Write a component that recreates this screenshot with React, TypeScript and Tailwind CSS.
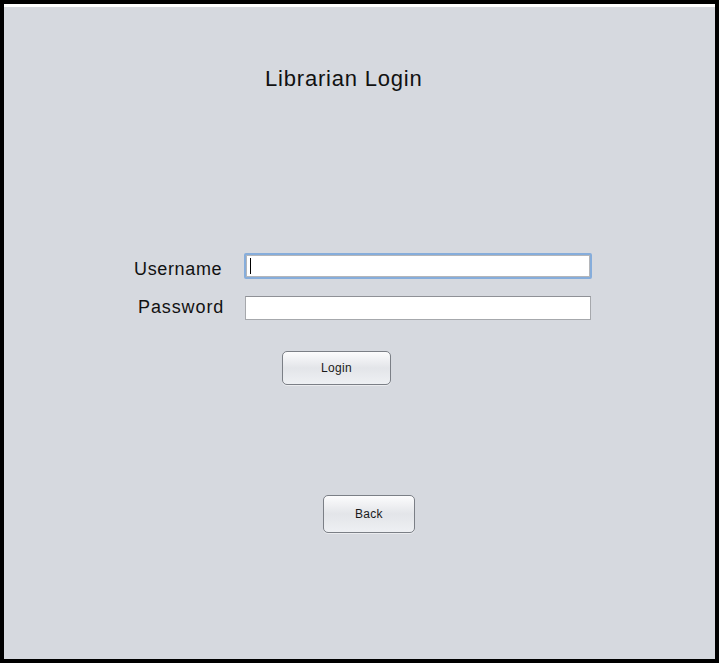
const FONT = { fontFamily: '"Liberation Sans", Arial, sans-serif' };

function NimbusButton({ label, className }: { label: string; className: string }) {
  return (
    <button
      type="button"
      className={`flex items-center justify-center rounded-[5px] border border-[#7b7f86] bg-gradient-to-b from-[#fcfcfd] via-[#e3e5e9] to-[#eef0f3] text-[12px] text-[#1a1a1a] tracking-[0.3px] shadow-[0_1px_0_rgba(255,255,255,0.5)] ${className}`}
    >
      {label}
    </button>
  );
}

export default function App() {
  return (
    <div className="h-[663px] w-[719px] bg-black p-[4px]" style={FONT}>
      <div className="h-full border-t-[3px] border-white bg-[#d6d9df]">
        {/* title */}
        <div className="pl-[261px] pt-[59px] text-[22px] leading-[26px] tracking-[0.8px] text-[#111]">
          Librarian Login
        </div>

        {/* form */}
        <div className="mt-[161px] flex flex-col">
          <div className="flex items-start">
            <div className="mt-[3px] w-[240px] pl-[130px] text-[18px] leading-[26px] tracking-[0.65px] text-[#111]">
              Username
            </div>
            <div className="h-[26px] w-[348px] rounded-[2px] border-2 border-[#86addb] bg-white">
              <div className="flex h-full items-center border border-[#b4b6ba] pl-[3px]">
                <span className="h-[16px] w-px bg-black" />
              </div>
            </div>
          </div>
          <div className="mt-[14px] flex items-start">
            <div className="mt-[-1px] w-[241px] pl-[134px] text-[18px] leading-[24px] tracking-[0.9px] text-[#111]">
              Password
            </div>
            <div className="h-[24px] w-[346px] border border-[#a6a8ac] border-t-[#8f9196] bg-white" />
          </div>
        </div>

        <div className="mt-[31px] pl-[278px]">
          <NimbusButton label="Login" className="h-[34px] w-[109px]" />
        </div>

        <div className="mt-[110px] pl-[319px]">
          <NimbusButton label="Back" className="h-[38px] w-[92px]" />
        </div>
      </div>
    </div>
  );
}
